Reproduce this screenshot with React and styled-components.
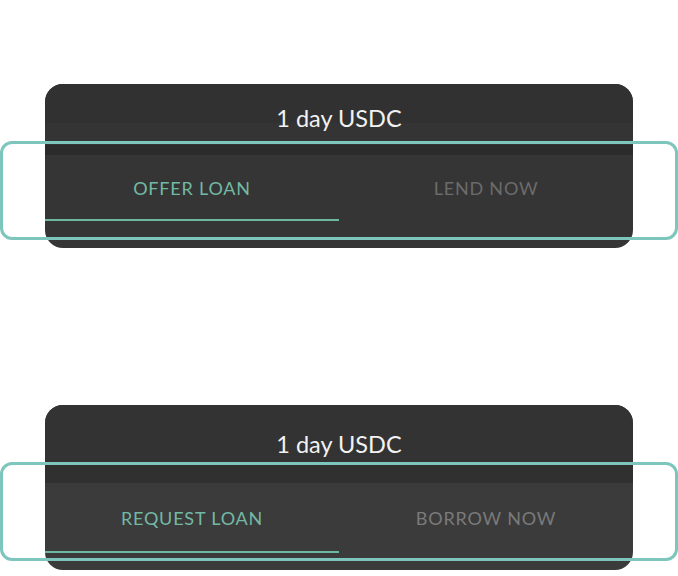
import React from "react";
import styled, { createGlobalStyle } from "styled-components";

const GlobalStyle = createGlobalStyle`
  body {
    margin: 0;
    background: #ffffff;
    font-family: Lato, "Noto Sans", sans-serif;
  }
`;

const Page = styled.div`
  display: flex;
  flex-direction: column;
  padding: 84px 45px 0;
  gap: 157px;
`;

const Card = styled.section`
  position: relative;
`;

const Panel = styled.div`
  border-radius: 18px;
  overflow: hidden;
  background: ${(p) => p.$tabBg};
`;

const Header = styled.div`
  height: ${(p) => p.$height}px;
  padding-top: ${(p) => p.$pad}px;
  box-sizing: border-box;
  background: ${(p) => p.$bg};
  text-align: center;
  color: #f2f2f2;
  font-size: 23.5px;
  line-height: 28px;
`;

const Band = styled.div`
  height: ${(p) => p.$height}px;
  background: ${(p) => p.$bg};
`;

const Tabs = styled.div`
  display: grid;
  grid-template-columns: 1fr 1fr;
  padding-bottom: ${(p) => p.$bottom}px;
`;

const Tab = styled.button`
  appearance: none;
  border: 0;
  background: transparent;
  height: ${(p) => p.$height}px;
  padding: ${(p) => p.$shift}px 0 0;
  font-family: Lato, "Noto Sans", sans-serif;
  font-size: 18px;
  letter-spacing: 0.8px;
  text-transform: uppercase;
  color: ${(p) => (p.$active ? "#72b9a4" : p.$muted)};
  border-bottom: 2px solid ${(p) => (p.$active ? "#6db8a1" : "transparent")};
  display: flex;
  align-items: center;
  justify-content: center;
  box-sizing: border-box;
`;

const Outline = styled.div`
  position: absolute;
  top: 57px;
  left: -45px;
  right: -45px;
  height: 99px;
  box-sizing: border-box;
  border: 3px solid #7dc6bd;
  border-radius: 12px;
  pointer-events: none;
`;

const variants = [
  {
    tabs: ["Offer loan", "Lend now"],
    headerBg: "linear-gradient(#313131 0 39px, #343434 39px)",
    headerHeight: 61,
    headerPad: 20,
    band: { height: 10, bg: "#2b2b2b" },
    tabBg: "#353535",
    tabHeight: 66,
    tabShift: 1,
    bottom: 27,
    muted: "#6b6b6b",
  },
  {
    tabs: ["Request loan", "Borrow now"],
    headerBg: "#333333",
    headerHeight: 60,
    headerPad: 25,
    band: { height: 18, bg: "#303030" },
    tabBg: "#3b3b3b",
    tabHeight: 70,
    tabShift: 2,
    bottom: 17,
    muted: "#7a7a7a",
  },
];

const LoanCard = ({ v }) => (
  <Card>
    <Panel $tabBg={v.tabBg}>
      <Header $bg={v.headerBg} $height={v.headerHeight} $pad={v.headerPad}>
        1 day USDC
      </Header>
      <Band $height={v.band.height} $bg={v.band.bg} />
      <Tabs $bottom={v.bottom}>
        {v.tabs.map((t, i) => (
          <Tab
            key={t}
            $active={i === 0}
            $muted={v.muted}
            $height={v.tabHeight}
            $shift={v.tabShift}
          >
            {t}
          </Tab>
        ))}
      </Tabs>
    </Panel>
    <Outline />
  </Card>
);

const App = () => (
  <>
    <GlobalStyle />
    <Page>
      {variants.map((v, i) => (
        <LoanCard key={i} v={v} />
      ))}
    </Page>
  </>
);

export default App;
